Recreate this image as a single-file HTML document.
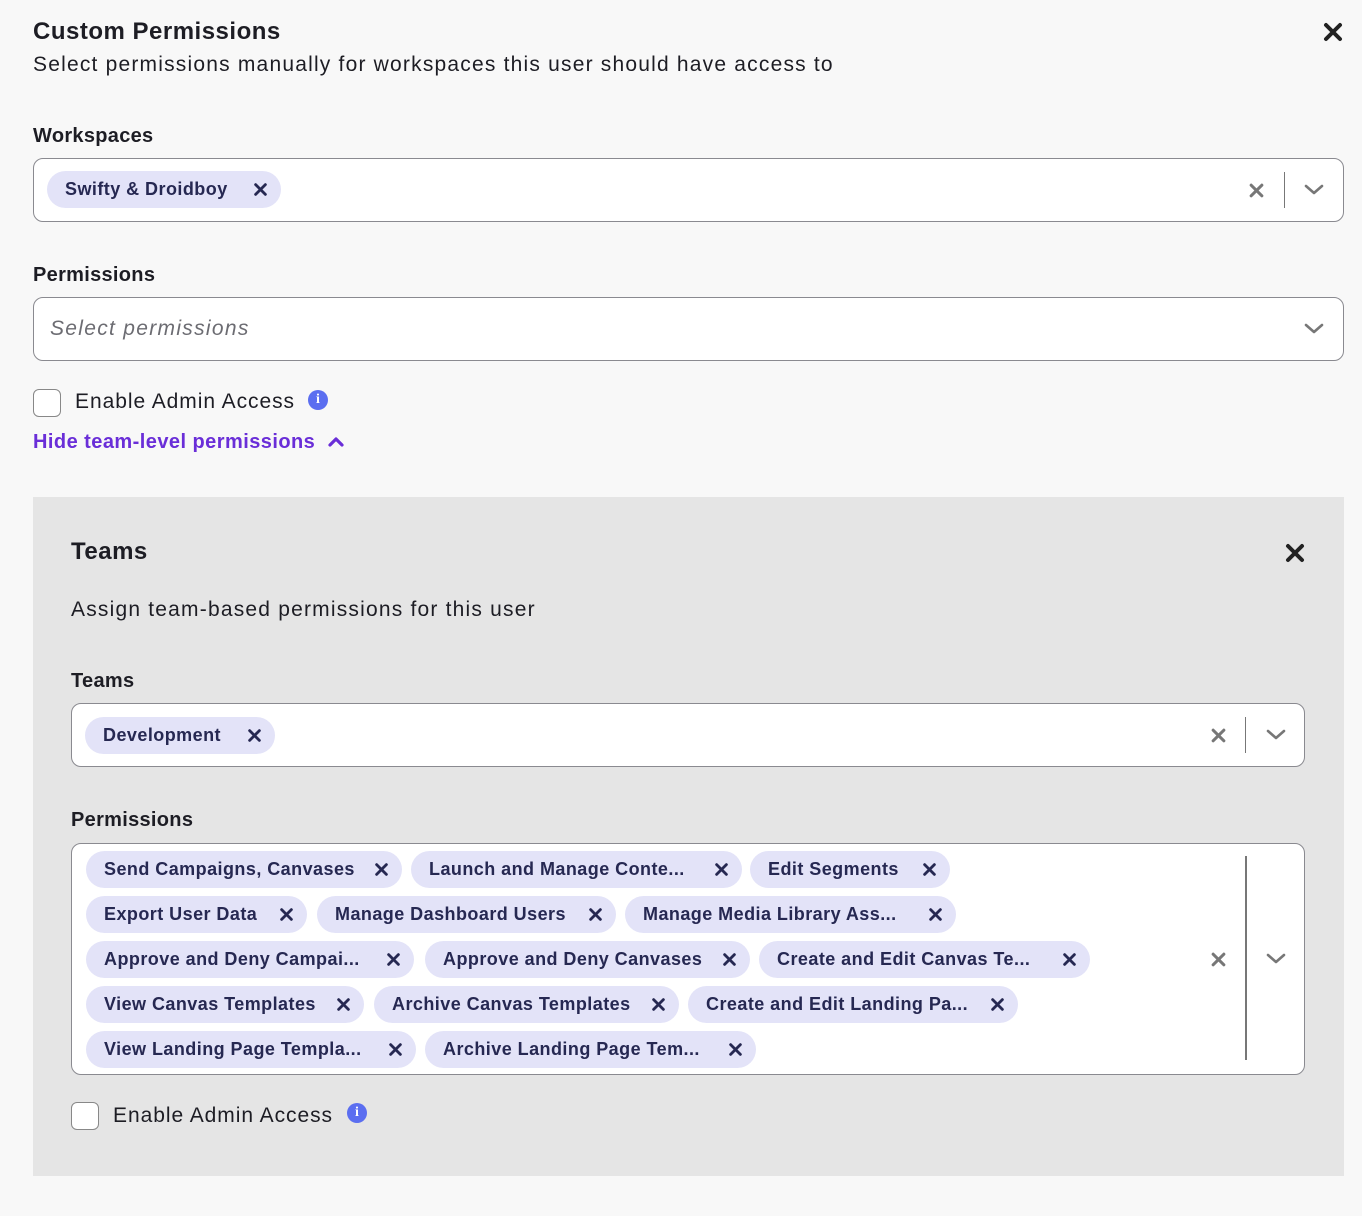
<!DOCTYPE html>
<html><head><meta charset="utf-8"><style>
*{box-sizing:border-box;margin:0;padding:0}
body{width:1362px;height:1216px;background:#f8f8f8;font-family:"Liberation Sans",sans-serif;color:#1d1d24;position:relative;overflow:hidden}
.a{position:absolute;white-space:nowrap}
.title{font-size:24px;font-weight:bold;letter-spacing:.5px}
.sub{font-size:21px;letter-spacing:1.2px}
.lbl{font-size:20px;font-weight:bold;letter-spacing:.3px}
.box{position:absolute;background:#fff;border:1px solid #8a8a90;border-radius:10px}
.chip{position:absolute;height:37px;border-radius:19px;background:#e3e3f8;color:#262852;font-weight:bold;font-size:18px;letter-spacing:.45px;line-height:37px;padding-left:18px;overflow:hidden}
.chip svg{position:absolute;right:14px;top:12px}
.cb{position:absolute;width:28px;height:28px;border:1px solid #888;border-radius:6px;background:#fff}
.info{position:absolute;width:20px;height:20px;border-radius:50%;background:#5b6ef0;color:#fff;font-size:14px;font-weight:bold;text-align:center;line-height:20px;font-family:"Liberation Serif",serif}
.ea{font-size:21px;letter-spacing:.95px}
</style></head><body>
<div class="a title" style="left:33px;top:18px">Custom Permissions</div>
<div class="a sub" style="left:33px;top:53px">Select permissions manually for workspaces this user should have access to</div>
<svg class="a" style="left:1323px;top:22px" width="20" height="20" viewBox="0 0 20 20"><path d="M3 3L17 17M17 3L3 17" stroke="#222" stroke-width="4" stroke-linecap="round"/></svg>

<div class="a lbl" style="left:33px;top:125px">Workspaces</div>
<div class="box" style="left:33px;top:158px;width:1311px;height:64px"></div>
<div class="chip" style="left:47px;top:171px;width:234px">Swifty &amp; Droidboy<svg width="13" height="13" viewBox="0 0 12 12"><path d="M1.5 1.5L10.5 10.5M10.5 1.5L1.5 10.5" stroke="#262852" stroke-width="2.6" stroke-linecap="round"/></svg></div>
<svg class="a" style="left:1249px;top:183px" width="15" height="15" viewBox="0 0 14 14"><path d="M2 2L12 12M12 2L2 12" stroke="#777" stroke-width="2.8" stroke-linecap="round"/></svg>
<div class="a" style="left:1284px;top:172px;width:1px;height:36px;background:#777"></div>
<svg class="a" style="left:1304px;top:184px" width="20" height="12" viewBox="0 0 20 12"><path d="M2 2L10 9L18 2" stroke="#777" stroke-width="2.6" fill="none" stroke-linecap="round" stroke-linejoin="round"/></svg>

<div class="a lbl" style="left:33px;top:264px">Permissions</div>
<div class="box" style="left:33px;top:297px;width:1311px;height:64px"></div>
<div class="a" style="left:50px;top:317px;font-size:21px;font-style:italic;color:#6c6c72;letter-spacing:1.3px">Select permissions</div>
<svg class="a" style="left:1304px;top:323px" width="20" height="12" viewBox="0 0 20 12"><path d="M2 2L10 9L18 2" stroke="#777" stroke-width="2.6" fill="none" stroke-linecap="round" stroke-linejoin="round"/></svg>

<div class="cb" style="left:33px;top:389px"></div>
<div class="a ea" style="left:75px;top:390px">Enable Admin Access</div>
<div class="info" style="left:308px;top:390px">i</div>
<div class="a" style="left:33px;top:431px;font-size:20px;font-weight:bold;color:#6a2ed8;letter-spacing:.45px">Hide team-level permissions</div>
<svg class="a" style="left:327px;top:436px" width="18" height="12" viewBox="0 0 18 12"><path d="M3 9L9 3L15 9" stroke="#6a2ed8" stroke-width="3.2" fill="none" stroke-linecap="round" stroke-linejoin="round"/></svg>

<div class="a" style="left:33px;top:497px;width:1311px;height:679px;background:#e5e5e5"></div>
<div class="a title" style="left:71px;top:538px">Teams</div>
<svg class="a" style="left:1285px;top:543px" width="20" height="20" viewBox="0 0 20 20"><path d="M3 3L17 17M17 3L3 17" stroke="#222" stroke-width="4" stroke-linecap="round"/></svg>
<div class="a sub" style="left:71px;top:598px">Assign team-based permissions for this user</div>
<div class="a lbl" style="left:71px;top:670px">Teams</div>
<div class="box" style="left:71px;top:703px;width:1234px;height:64px"></div>
<div class="chip" style="left:85px;top:717px;width:190px">Development<svg width="13" height="13" viewBox="0 0 12 12"><path d="M1.5 1.5L10.5 10.5M10.5 1.5L1.5 10.5" stroke="#262852" stroke-width="2.6" stroke-linecap="round"/></svg></div>
<svg class="a" style="left:1211px;top:728px" width="15" height="15" viewBox="0 0 14 14"><path d="M2 2L12 12M12 2L2 12" stroke="#777" stroke-width="2.8" stroke-linecap="round"/></svg>
<div class="a" style="left:1245px;top:717px;width:1px;height:36px;background:#777"></div>
<svg class="a" style="left:1266px;top:729px" width="20" height="12" viewBox="0 0 20 12"><path d="M2 2L10 9L18 2" stroke="#777" stroke-width="2.6" fill="none" stroke-linecap="round" stroke-linejoin="round"/></svg>

<div class="a lbl" style="left:71px;top:809px">Permissions</div>
<div class="box" style="left:71px;top:843px;width:1234px;height:232px"></div>
<div class="chip" style="left:86px;top:851px;width:316px">Send Campaigns, Canvases<svg width="13" height="13" viewBox="0 0 12 12"><path d="M1.5 1.5L10.5 10.5M10.5 1.5L1.5 10.5" stroke="#262852" stroke-width="2.6" stroke-linecap="round"/></svg></div>
<div class="chip" style="left:411px;top:851px;width:331px">Launch and Manage Conte...<svg width="13" height="13" viewBox="0 0 12 12"><path d="M1.5 1.5L10.5 10.5M10.5 1.5L1.5 10.5" stroke="#262852" stroke-width="2.6" stroke-linecap="round"/></svg></div>
<div class="chip" style="left:750px;top:851px;width:200px">Edit Segments<svg width="13" height="13" viewBox="0 0 12 12"><path d="M1.5 1.5L10.5 10.5M10.5 1.5L1.5 10.5" stroke="#262852" stroke-width="2.6" stroke-linecap="round"/></svg></div>
<div class="chip" style="left:86px;top:896px;width:221px">Export User Data<svg width="13" height="13" viewBox="0 0 12 12"><path d="M1.5 1.5L10.5 10.5M10.5 1.5L1.5 10.5" stroke="#262852" stroke-width="2.6" stroke-linecap="round"/></svg></div>
<div class="chip" style="left:317px;top:896px;width:299px">Manage Dashboard Users<svg width="13" height="13" viewBox="0 0 12 12"><path d="M1.5 1.5L10.5 10.5M10.5 1.5L1.5 10.5" stroke="#262852" stroke-width="2.6" stroke-linecap="round"/></svg></div>
<div class="chip" style="left:625px;top:896px;width:331px">Manage Media Library Ass...<svg width="13" height="13" viewBox="0 0 12 12"><path d="M1.5 1.5L10.5 10.5M10.5 1.5L1.5 10.5" stroke="#262852" stroke-width="2.6" stroke-linecap="round"/></svg></div>
<div class="chip" style="left:86px;top:941px;width:328px">Approve and Deny Campai...<svg width="13" height="13" viewBox="0 0 12 12"><path d="M1.5 1.5L10.5 10.5M10.5 1.5L1.5 10.5" stroke="#262852" stroke-width="2.6" stroke-linecap="round"/></svg></div>
<div class="chip" style="left:425px;top:941px;width:325px">Approve and Deny Canvases<svg width="13" height="13" viewBox="0 0 12 12"><path d="M1.5 1.5L10.5 10.5M10.5 1.5L1.5 10.5" stroke="#262852" stroke-width="2.6" stroke-linecap="round"/></svg></div>
<div class="chip" style="left:759px;top:941px;width:331px">Create and Edit Canvas Te...<svg width="13" height="13" viewBox="0 0 12 12"><path d="M1.5 1.5L10.5 10.5M10.5 1.5L1.5 10.5" stroke="#262852" stroke-width="2.6" stroke-linecap="round"/></svg></div>
<div class="chip" style="left:86px;top:986px;width:278px">View Canvas Templates<svg width="13" height="13" viewBox="0 0 12 12"><path d="M1.5 1.5L10.5 10.5M10.5 1.5L1.5 10.5" stroke="#262852" stroke-width="2.6" stroke-linecap="round"/></svg></div>
<div class="chip" style="left:374px;top:986px;width:305px">Archive Canvas Templates<svg width="13" height="13" viewBox="0 0 12 12"><path d="M1.5 1.5L10.5 10.5M10.5 1.5L1.5 10.5" stroke="#262852" stroke-width="2.6" stroke-linecap="round"/></svg></div>
<div class="chip" style="left:688px;top:986px;width:330px">Create and Edit Landing Pa...<svg width="13" height="13" viewBox="0 0 12 12"><path d="M1.5 1.5L10.5 10.5M10.5 1.5L1.5 10.5" stroke="#262852" stroke-width="2.6" stroke-linecap="round"/></svg></div>
<div class="chip" style="left:86px;top:1031px;width:330px">View Landing Page Templa...<svg width="13" height="13" viewBox="0 0 12 12"><path d="M1.5 1.5L10.5 10.5M10.5 1.5L1.5 10.5" stroke="#262852" stroke-width="2.6" stroke-linecap="round"/></svg></div>
<div class="chip" style="left:425px;top:1031px;width:331px">Archive Landing Page Tem...<svg width="13" height="13" viewBox="0 0 12 12"><path d="M1.5 1.5L10.5 10.5M10.5 1.5L1.5 10.5" stroke="#262852" stroke-width="2.6" stroke-linecap="round"/></svg></div>
<svg class="a" style="left:1211px;top:952px" width="15" height="15" viewBox="0 0 14 14"><path d="M2 2L12 12M12 2L2 12" stroke="#777" stroke-width="2.8" stroke-linecap="round"/></svg>
<div class="a" style="left:1245px;top:856px;width:2px;height:204px;background:#777"></div>
<svg class="a" style="left:1266px;top:953px" width="20" height="12" viewBox="0 0 20 12"><path d="M2 2L10 9L18 2" stroke="#777" stroke-width="2.6" fill="none" stroke-linecap="round" stroke-linejoin="round"/></svg>

<div class="cb" style="left:71px;top:1102px"></div>
<div class="a ea" style="left:113px;top:1104px">Enable Admin Access</div>
<div class="info" style="left:347px;top:1103px">i</div>
</body></html>
